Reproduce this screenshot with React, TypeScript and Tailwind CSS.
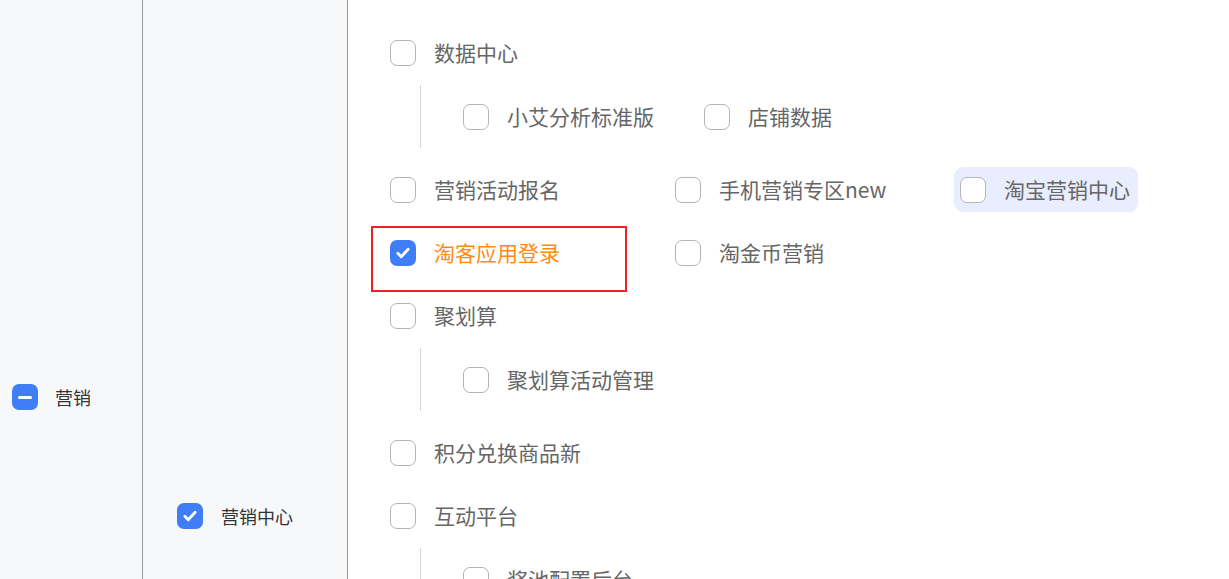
import React from "react";

type Item = { label: string; checked?: boolean; active?: boolean; marked?: boolean };
type Row = { items: Item[]; sub?: Item[] };

const rows: Row[] = [
	{ items: [{ label: "数据中心" }], sub: [{ label: "小艾分析标准版" }, { label: "店铺数据" }] },
	{ items: [{ label: "营销活动报名" }, { label: "手机营销专区new" }, { label: "淘宝营销中心", active: true }] },
	{ items: [{ label: "淘客应用登录", checked: true, marked: true }, { label: "淘金币营销" }] },
	{ items: [{ label: "聚划算" }], sub: [{ label: "聚划算活动管理" }] },
	{ items: [{ label: "积分兑换商品新" }] },
	{ items: [{ label: "互动平台" }], sub: [{ label: "奖池配置后台" }] },
];

function Box({ state }: { state?: "checked" | "partial" }) {
	if (state === "checked") {
		return (
			<span className="w-[26px] h-[26px] rounded-[7px] bg-[#3f7ef7] flex items-center justify-center shrink-0">
				<svg width="18" height="18" viewBox="0 0 16 16" fill="none">
					<path d="M3.4 8.3l3 3 6.2-6.6" stroke="white" strokeWidth="2.5" strokeLinecap="round" strokeLinejoin="round" />
				</svg>
			</span>
		);
	}
	if (state === "partial") {
		return (
			<span className="w-[26px] h-[26px] rounded-[7px] bg-[#3f7ef7] flex items-center justify-center shrink-0">
				<span className="w-[14px] h-[3px] rounded-full bg-white"></span>
			</span>
		);
	}
	return <span className="w-[26px] h-[26px] rounded-[7px] border border-[#b4b4bc] bg-white shrink-0"></span>;
}

function Option({ item }: { item: Item }) {
	return (
		<div className="w-[285px] shrink-0 flex items-center">
			<div
				className={`relative flex items-center gap-[18px] ${
					item.active ? "bg-[#e8eefd] rounded-[9px] h-[45px] pl-[6px] pr-[8px] -ml-[6px]" : ""
				}`}>
				{item.marked && (
					<div className="absolute left-[-19px] top-[-14px] w-[256px] h-[66px] border-2 border-[#e82424]"></div>
				)}
				<Box state={item.checked ? "checked" : undefined} />
				<span className={`leading-none ${item.checked ? "text-[#ff8a14]" : "text-[#666]"}`}>{item.label}</span>
			</div>
		</div>
	);
}

export default function App() {
	return (
		<div
			className="w-[1229px] h-[579px] overflow-hidden flex bg-white"
			style={{ fontFamily: '"Noto Sans CJK SC", "Noto Sans", sans-serif' }}>
			{/* level 1 */}
			<div className="w-[143px] shrink-0 bg-[#f7f8fa] border-r border-[#9a9a9a]">
				<div className="h-[794px] flex items-center pl-[12px] gap-[17px] text-[18px] text-[#333]">
					<Box state="partial" />
					<span className="leading-none">营销</span>
				</div>
			</div>

			{/* level 2 */}
			<div className="w-[205px] shrink-0 bg-[#f7f8fa] border-r border-[#9a9a9a]">
				<div className="h-[1032px] flex items-center pl-[34px] gap-[18px] text-[18px] text-[#333]">
					<Box state="checked" />
					<span className="leading-none">营销中心</span>
				</div>
			</div>

			{/* level 3 */}
			<div className="flex-1 pl-[42px] pt-[21px] text-[21px]">
				{rows.map((row, i) => (
					<div key={i}>
						<div className="h-[63px] flex items-center">
							{row.items.map((item) => (
								<Option key={item.label} item={item} />
							))}
						</div>
						{row.sub && (
							<div className="ml-[30px] mt-[1px] mb-[10px] h-[63px] border-l border-[#d8d8d8] pl-[42px] flex items-center gap-[50px]">
								{row.sub.map((item) => (
									<div key={item.label} className="flex items-center gap-[18px]">
										<Box />
										<span className="leading-none text-[#666]">{item.label}</span>
									</div>
								))}
							</div>
						)}
					</div>
				))}
			</div>
		</div>
	);
}
